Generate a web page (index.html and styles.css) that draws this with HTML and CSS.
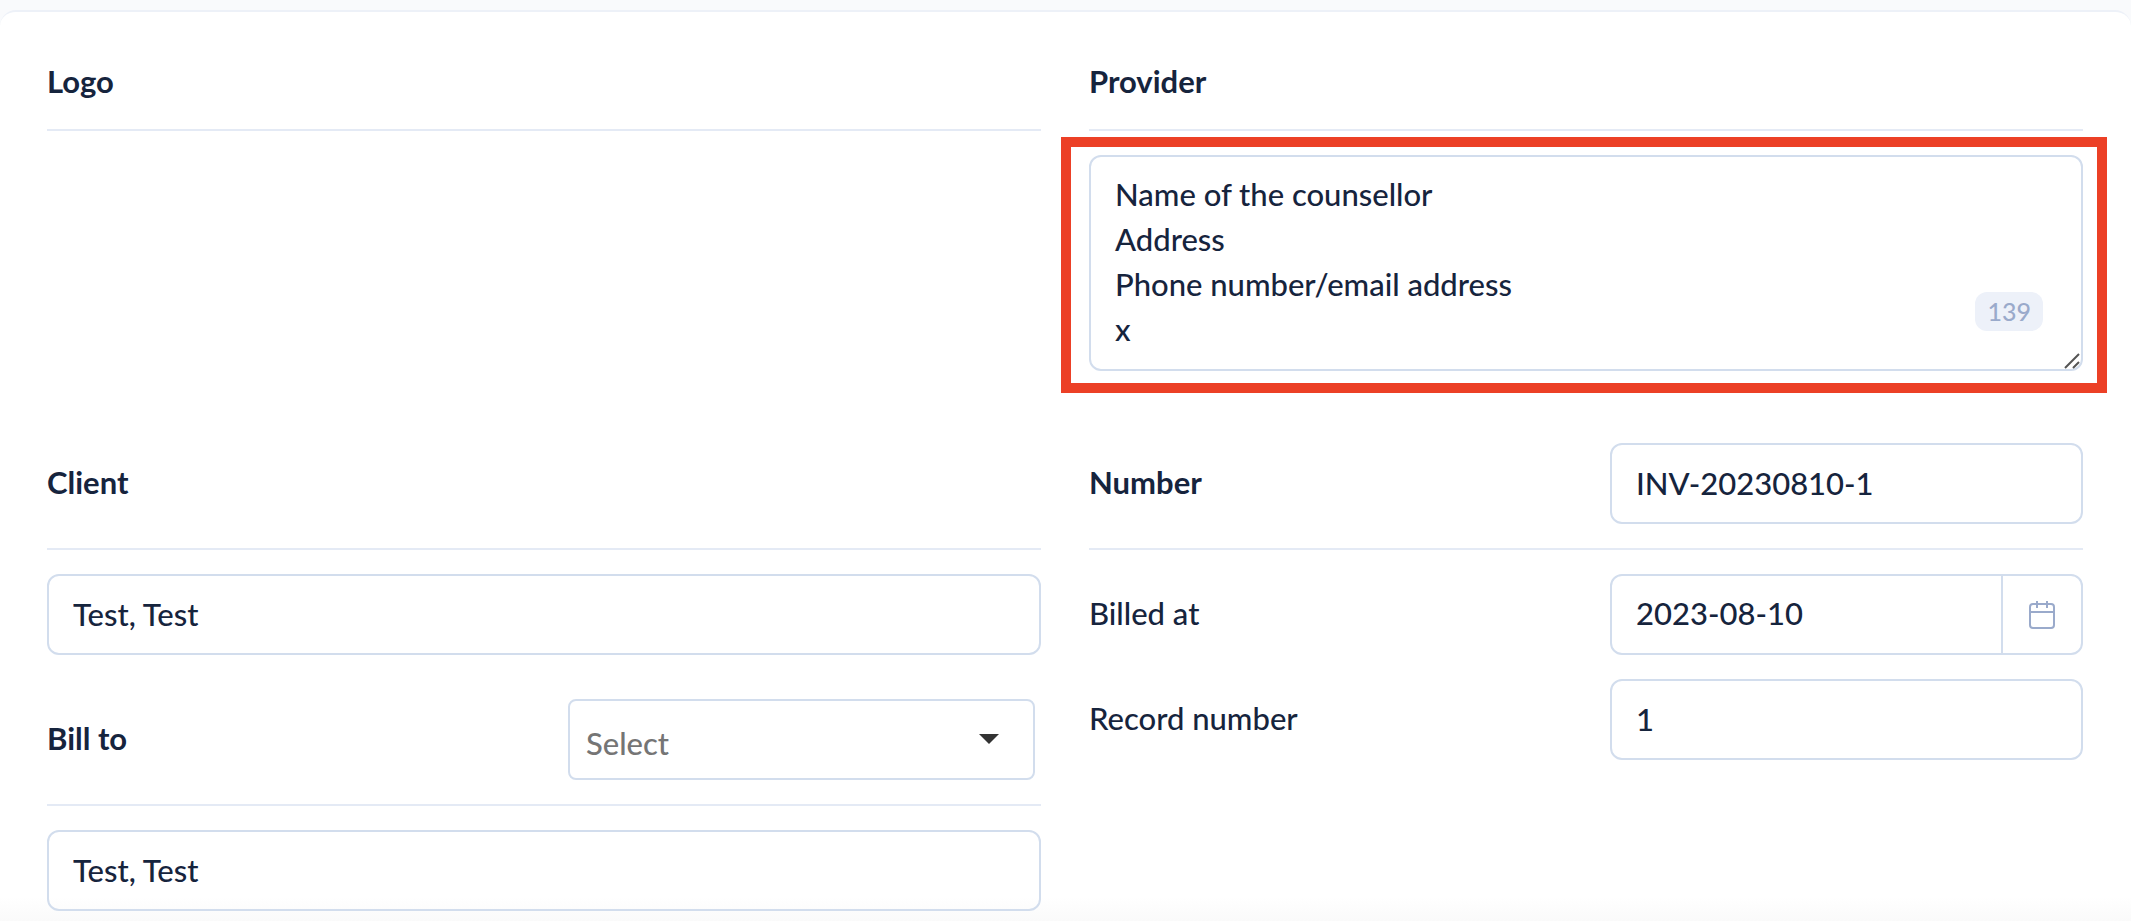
FILE: index.html
```html
<!DOCTYPE html>
<html lang="en">
<head>
    <meta charset="UTF-8">
    <meta name="viewport" content="width=device-width, initial-scale=1.0">
    <title>Invoice</title>
    <link rel="stylesheet" href="styles.css">
</head>
<body>
    <form class="card">
        <section>
            <div class="section-header">
                <h2>Logo</h2>
            </div>
        </section>

        <section>
            <div class="section-header">
                <h2><label for="provider">Provider</label></h2>
            </div>
            <div class="provider-box">
                <textarea class="field" id="provider" rows="4">Name of the counsellor
Address
Phone number/email address
x</textarea>
                <span class="counter">139</span>
                <svg class="grip" viewBox="0 0 16 16" fill="none" stroke="#555" stroke-width="2">
                    <path d="M1 15L15 1M9 15L15 9"/>
                </svg>
            </div>
        </section>

        <section>
            <div class="section-header split">
                <h2><label for="client">Client</label></h2>
            </div>
            <input class="field" type="text" id="client" value="Test, Test">

            <div class="section-header split bill-to">
                <h2><label for="bill_to">Bill to</label></h2>
                <div class="select-box">
                    <select id="bill_to">
                        <option>Select</option>
                    </select>
                    <svg class="arrow" viewBox="0 0 20 10"><path d="M0 0h20L10 10z" fill="#333"/></svg>
                </div>
            </div>
            <input class="field" type="text" aria-label="Bill to name" value="Test, Test">
        </section>

        <section>
            <div class="section-header split">
                <h2><label for="number">Number</label></h2>
                <input class="field" type="text" id="number" value="INV-20230810-1">
            </div>
            <div class="split form-row">
                <label for="billed_at">Billed at</label>
                <div class="field date-group">
                    <input type="text" id="billed_at" value="2023-08-10">
                    <button type="button" aria-label="Open calendar">
                        <svg width="26" height="28" viewBox="0 0 26 28" fill="none" stroke="#9aaacb" stroke-width="2">
                            <rect x="1" y="3" width="24" height="24" rx="3"/>
                            <path d="M1 11h24M8 0v7M18 0v7"/>
                        </svg>
                    </button>
                </div>
            </div>
            <div class="split form-row">
                <label for="record_number">Record number</label>
                <input class="field" type="text" id="record_number" value="1">
            </div>
        </section>
    </form>
</body>
</html>
```
FILE: styles.css
```css
* { box-sizing: border-box; }
body { margin: 0; padding-top: 10px; background: #f9fafc; color: #16243d; font-family: Lato, "Liberation Sans", sans-serif; font-size: 31px; font-weight: 500; line-height: 45px; }
input, textarea, select, button { margin: 0; font: inherit; color: inherit; background: none; }
h2 { margin: 0; padding-bottom: 3px; font-size: 31px; font-weight: 700; line-height: 42px; }

/* Two column card */
.card { display: grid; grid-template-columns: 1fr 1fr; gap: 72px 48px; padding: 48px 48px 10px 47px; background: linear-gradient(to top, #fafafa, #fff 24px); border-top: 2px solid #edf1f8; border-radius: 16px 16px 0 0; }
.section-header { padding-bottom: 24px; margin-bottom: 24px; border-bottom: 2px solid #e4eaf5; }
.split { display: grid; grid-template-columns: minmax(0, 1fr) minmax(0, 1fr); column-gap: 48px; align-items: center; min-height: 81px; }
.section-header.split { min-height: 107px; }
.bill-to { margin-top: 44px; }
.form-row { margin-bottom: 24px; }
.form-row:last-child { margin-bottom: 0; }
.form-row label { padding-bottom: 3px; }

/* Fields */
.field { display: block; width: 100%; height: 81px; padding: 0 24px 2px; border: 2px solid #d2dded; border-radius: 12px; }
textarea.field { height: auto; padding: 15px 24px 17px; resize: none; overflow: hidden; }

.provider-box { position: relative; }
.provider-box::after { content: ""; position: absolute; inset: -18px -24px -22px -28px; border: 10px solid #ec4026; pointer-events: none; }
.counter { position: absolute; right: 40px; bottom: 40px; padding: 0 12px; border-radius: 12px; background: #edf1f9; color: #9aaacb; font-size: 25px; line-height: 39px; }
.grip { position: absolute; right: 3px; bottom: 2px; width: 16px; height: 16px; }

.select-box { position: relative; margin-right: 6px; }
.select-box select { display: block; width: 100%; height: 81px; padding: 8px 56px 0 16px; border: 2px solid #d2dded; border-radius: 8px; appearance: none; color: #757575; }
.arrow { position: absolute; right: 36px; top: 35px; width: 20px; height: 10px; pointer-events: none; }

.date-group { display: flex; padding: 0; }
.date-group input { flex: 1; min-width: 0; padding: 0 24px 2px; border: 0; }
.date-group button { display: flex; align-items: center; justify-content: center; width: 80px; padding: 0; border: 0; border-left: 2px solid #d2dded; }
```
